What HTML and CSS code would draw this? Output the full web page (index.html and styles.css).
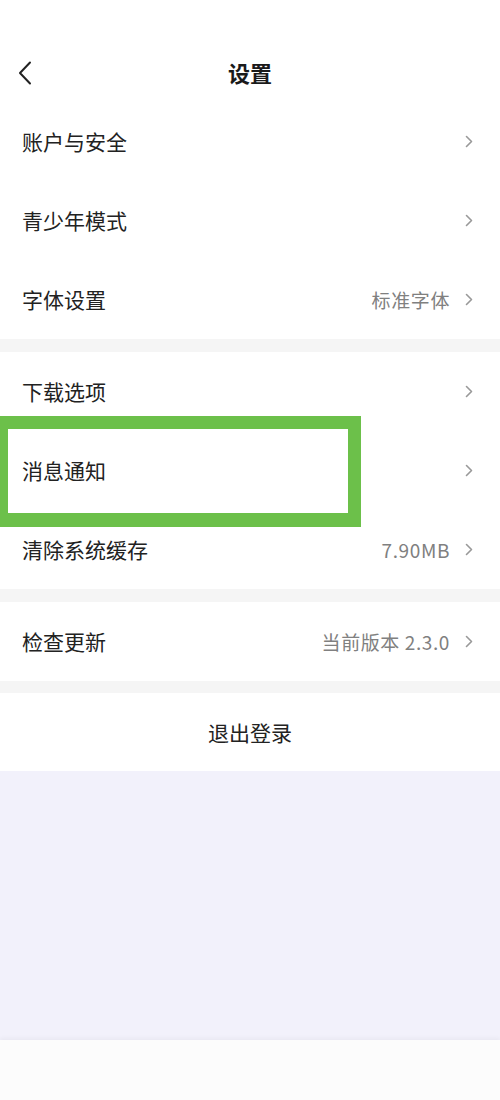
FILE: index.html
```html
<!DOCTYPE html>
<html lang="zh-CN">
<head>
<meta charset="utf-8">
<title>设置</title>
<link rel="stylesheet" href="styles.css">
</head>
<body>
<div class="page">
  <header class="header">
    <svg class="back" width="16" height="24" viewBox="0 0 16 24"><path d="M13 1.5 L3 12 L13 22.5" fill="none" stroke="#222" stroke-width="2" stroke-linecap="round" stroke-linejoin="round"/></svg>
    <h1 class="title">设置</h1>
  </header>

  <section class="group">
    <div class="row"><span class="label">账户与安全</span><span class="right"><svg class="chev" width="8" height="13" viewBox="0 0 8 13"><path d="M1.5 1.5 L6.5 6.5 L1.5 11.5" fill="none" stroke="#999" stroke-width="1.6" stroke-linecap="round" stroke-linejoin="round"/></svg></span></div>
    <div class="row"><span class="label">青少年模式</span><span class="right"><svg class="chev" width="8" height="13" viewBox="0 0 8 13"><path d="M1.5 1.5 L6.5 6.5 L1.5 11.5" fill="none" stroke="#999" stroke-width="1.6" stroke-linecap="round" stroke-linejoin="round"/></svg></span></div>
    <div class="row"><span class="label">字体设置</span><span class="right"><span class="value">标准字体</span><svg class="chev" width="8" height="13" viewBox="0 0 8 13"><path d="M1.5 1.5 L6.5 6.5 L1.5 11.5" fill="none" stroke="#999" stroke-width="1.6" stroke-linecap="round" stroke-linejoin="round"/></svg></span></div>
  </section>

  <section class="group">
    <div class="row"><span class="label">下载选项</span><span class="right"><svg class="chev" width="8" height="13" viewBox="0 0 8 13"><path d="M1.5 1.5 L6.5 6.5 L1.5 11.5" fill="none" stroke="#999" stroke-width="1.6" stroke-linecap="round" stroke-linejoin="round"/></svg></span></div>
    <div class="row highlighted"><span class="label">消息通知</span><span class="right"><svg class="chev" width="8" height="13" viewBox="0 0 8 13"><path d="M1.5 1.5 L6.5 6.5 L1.5 11.5" fill="none" stroke="#999" stroke-width="1.6" stroke-linecap="round" stroke-linejoin="round"/></svg></span><span class="mark"></span></div>
    <div class="row"><span class="label">清除系统缓存</span><span class="right"><span class="value">7.90MB</span><svg class="chev" width="8" height="13" viewBox="0 0 8 13"><path d="M1.5 1.5 L6.5 6.5 L1.5 11.5" fill="none" stroke="#999" stroke-width="1.6" stroke-linecap="round" stroke-linejoin="round"/></svg></span></div>
  </section>

  <section class="group short">
    <div class="row"><span class="label">检查更新</span><span class="right"><span class="value">当前版本 2.3.0</span><svg class="chev" width="8" height="13" viewBox="0 0 8 13"><path d="M1.5 1.5 L6.5 6.5 L1.5 11.5" fill="none" stroke="#999" stroke-width="1.6" stroke-linecap="round" stroke-linejoin="round"/></svg></span></div>
  </section>

  <section class="group last">
    <div class="row logout"><span class="label">退出登录</span></div>
  </section>

  <div class="filler"></div>
  <div class="footer"></div>
</div>
</body>
</html>
```

FILE: styles.css
```css
* { box-sizing: border-box; margin: 0; padding: 0; }
html, body { width: 500px; height: 1100px; overflow: hidden; }
body {
  background: #f5f5f5;
  font-family: "Noto Sans CJK SC", "Noto Sans", sans-serif;
  color: #222;
}
.page {
  display: flex;
  flex-direction: column;
  height: 1100px;
}
.header {
  height: 102px;
  background: #fff;
  display: flex;
  align-items: center;
  justify-content: center;
  padding-top: 46px;
  position: relative;
}
.back {
  position: absolute;
  left: 17px;
  top: 61px;
}
.title {
  font-size: 22px;
  font-weight: 600;
  color: #1a1a1a;
  line-height: 1;
  margin-top: -4px;
}
.group {
  background: #fff;
  margin-bottom: 13px;
}
.group.short { margin-bottom: 12px; }
.group.last { margin-bottom: 0; }
.row {
  height: 79px;
  display: flex;
  align-items: center;
  justify-content: space-between;
  padding: 0 27px 0 22px;
  position: relative;
}
.label {
  font-size: 21px;
  color: #222;
  line-height: 1;
}
.right {
  display: flex;
  align-items: center;
  gap: 15px;
}
.value {
  font-size: 19px;
  color: #808080;
  line-height: 1;
  letter-spacing: 0.6px;
}
.chev { display: block; }
.logout {
  justify-content: center;
  padding: 0;
  height: 78px;
}
.mark {
  position: absolute;
  left: 0;
  top: -15px;
  width: 361px;
  height: 111px;
  border: solid #6cc04a;
  border-width: 13px 13px 14px 8px;
  pointer-events: none;
}
.filler {
  flex: none;
  height: 269px;
  background: #f2f1fb;
}
.footer {
  flex: 1;
  background: #fcfcfc;
  box-shadow: 0 -2px 4px rgba(0,0,0,0.04);
}
```
